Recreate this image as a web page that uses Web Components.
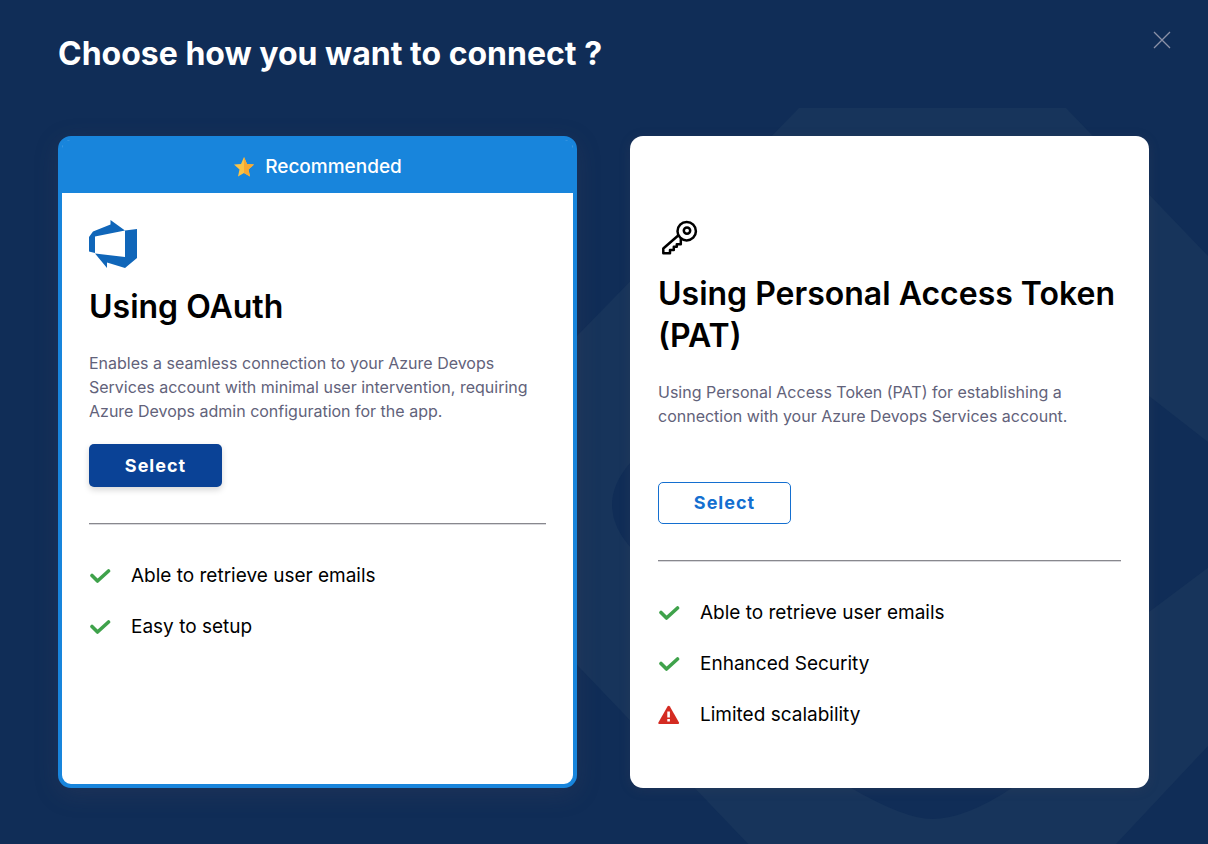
<!DOCTYPE html>
<html lang="en">
<head>
<meta charset="utf-8">
<title>Choose how you want to connect</title>
<style>
  html, body { margin: 0; min-height: 100%; }
  body { background: #102d57; font-family: Inter, "Liberation Sans", sans-serif; }
</style>
</head>
<body>
<connect-dialog>
  <connect-card featured>
    <app-icon slot="icon" name="azure"></app-icon>
    <span slot="title">Using OAuth</span>
    <span slot="text">Enables a seamless connection to your Azure Devops Services account with minimal user intervention, requiring Azure Devops admin configuration for the app.</span>
    <feature-item>Able to retrieve user emails</feature-item>
    <feature-item>Easy to setup</feature-item>
  </connect-card>
  <connect-card>
    <app-icon slot="icon" name="key"></app-icon>
    <span slot="title">Using Personal Access Token (PAT)</span>
    <span slot="text">Using Personal Access Token (PAT) for establishing a connection with your Azure Devops Services account.</span>
    <feature-item>Able to retrieve user emails</feature-item>
    <feature-item>Enhanced Security</feature-item>
    <feature-item warning>Limited scalability</feature-item>
  </connect-card>
</connect-dialog>
<script>
const ICONS = {
  azure: '<svg width="48" height="48" viewBox="0 0 48 48"><path fill="#1066b9" d="M0 17 4 11.500 21.500 4.500V0L36 10.500 6 16.500V33L0 31.500ZM36 10.500 48 9V38L36 48 18 42.500V48L6 33.500 36 37Z"/></svg>',
  key: '<svg width="40" height="36" viewBox="0 0 40 36" fill="none" stroke="#000" stroke-width="2.500" stroke-linejoin="round" stroke-linecap="round"><circle cx="28.700" cy="11.200" r="9.200"/><circle cx="29" cy="10.600" r="3.200"/><path d="M20.200 15.500 5.300 28.500V33.300H12V30H15.800V26.800H18.800V24.200H22.800V19.500"/></svg>',
  star: '<svg width="22" height="22" viewBox="0 0 22 22"><path fill="#fbc346" d="M11 1 14 8 21 8.500 15.500 13.500 17 20.500 11 17 5 20.500 6.500 13.500 1 8.500 8 8Z"/><path fill="#f9a932" d="M11 1 14 8 21 8.500 15.500 13.500 17 20.500 11 17Z"/></svg>',
  check: '<svg width="22" height="20" viewBox="0 0 22 20"><path fill="none" stroke="#3fa24b" stroke-width="3.600" stroke-linecap="round" stroke-linejoin="round" d="M3 9.500 8.500 15 19.500 5"/></svg>',
  warning: '<svg width="22" height="20" viewBox="0 0 22 20"><path fill="#d42b22" d="M9.500 1.500Q10.700 0 11.900 1.500L21 17.500Q21.400 19 20 19H1.300Q-.2 19 .4 17.500Z"/><path fill="#fff" d="M9.300 6.500h2.600v6H9.300zM9.300 14h2.600v2.500H9.300z"/></svg>',
  close: '<svg width="20" height="20" viewBox="0 0 20 20"><path stroke="#8b91a8" stroke-width="1.300" d="M2 2 18 18M18 2 2 18"/></svg>'
};

customElements.define('app-icon', class extends HTMLElement {
  constructor() {
    super();
    this.attachShadow({ mode: 'open' });
  }
  connectedCallback() {
    this.shadowRoot.innerHTML = `<style>:host{display:block;flex:none}svg{display:block}</style>${ICONS[this.getAttribute('name')]}`;
  }
});

customElements.define('feature-item', class extends HTMLElement {
  constructor() {
    super();
    this.attachShadow({ mode: 'open' });
  }
  connectedCallback() {
    const icon = this.hasAttribute('warning') ? 'warning' : 'check';
    this.setAttribute('role', 'listitem');
    this.shadowRoot.innerHTML = `<style>
      :host{display:flex;align-items:center;gap:20px;font-size:19px;line-height:24px;color:#000}
    </style><app-icon name="${icon}"></app-icon><span><slot></slot></span>`;
  }
});

customElements.define('connect-card', class extends HTMLElement {
  constructor() {
    super();
    this.attachShadow({ mode: 'open' });
  }
  connectedCallback() {
    const banner = this.hasAttribute('featured')
      ? '<div class="banner"><app-icon name="star"></app-icon><span>Recommended</span></div>' : '';
    this.shadowRoot.innerHTML = `<style>
      :host{display:block;box-sizing:border-box;min-height:652px;border-radius:13px;background:#fff;padding:84px 28px 28px;color:#000;box-shadow:0 2px 12px rgba(80,75,90,.2)}
      :host([featured]){border:4px solid #1885dc;padding:0 27px 27px;box-shadow:0 6px 24px rgba(80,75,90,.22)}
      .banner{display:flex;align-items:center;justify-content:center;gap:10px;height:53px;margin:0 -27px 27px;background:#1885dc;border-radius:8px 8px 0 0;color:#fff;font-size:19px;font-weight:500;line-height:24px}
      h2{margin:17px 0 0;font-size:32px;line-height:42px;font-weight:600}
      :host([featured]) h2{margin-top:18px}
      p{margin:23px 0 0;font-size:16px;line-height:24px;color:#62627a}
      button{display:block;box-sizing:border-box;width:133px;height:42px;margin:54px 0 0;padding:0;border:1px solid #146fd0;border-radius:5px;background:#fff;color:#146fd0;font:700 18px/24px Inter,"Liberation Sans",sans-serif;letter-spacing:1px}
      :host([featured]) button{height:43px;margin-top:21px;border:0;background:#0a4296;color:#fff;box-shadow:0 3px 6px rgba(0,0,0,.16)}
      hr{margin:36px 0 0;border:0;border-top:1px solid #88888e;border-bottom:1px solid #d8d8dc}
      .list{display:flex;flex-direction:column;gap:27px;margin-top:39px}
    </style>${banner}<slot name="icon"></slot><h2><slot name="title"></slot></h2><p><slot name="text"></slot></p>
    <button type="button">Select</button><hr><div class="list" role="list"><slot></slot></div>`;
  }
});

customElements.define('connect-dialog', class extends HTMLElement {
  constructor() {
    super();
    this.attachShadow({ mode: 'open' }).innerHTML = `<style>
      :host{display:block;position:relative;overflow:hidden;min-height:100vh;box-sizing:border-box;padding:32px 59px 56px 58px}
      .art{position:absolute;top:0;right:0;width:660px;height:900px}
      header{display:flex;justify-content:space-between;align-items:flex-start;position:relative;margin-right:-23px;margin-bottom:60px}
      h1{margin:0;font-size:32px;line-height:44px;font-weight:700;color:#fff}
      button{padding:0;border:0;background:none;margin-top:-2px}
      main{display:grid;grid-template-columns:repeat(2,minmax(0,1fr));gap:53px;position:relative}
    </style>
    <svg class="art" viewBox="548 0 660 900" aria-hidden="true"><path fill="#17345b" fill-rule="evenodd" d="M799 108H1066L1330 383V616L1070 893H795L540 626V374ZM630 463Q594 505 630 547L851 788Q905 819 932 819 965 819 1012 788L1149 612 1290 506 1149 396Z"/></svg>
    <header><h1>Choose how you want to connect ?</h1><button type="button" aria-label="Close"><app-icon name="close"></app-icon></button></header>
    <main><slot></slot></main>`;
  }
});
</script>
</body>
</html>
